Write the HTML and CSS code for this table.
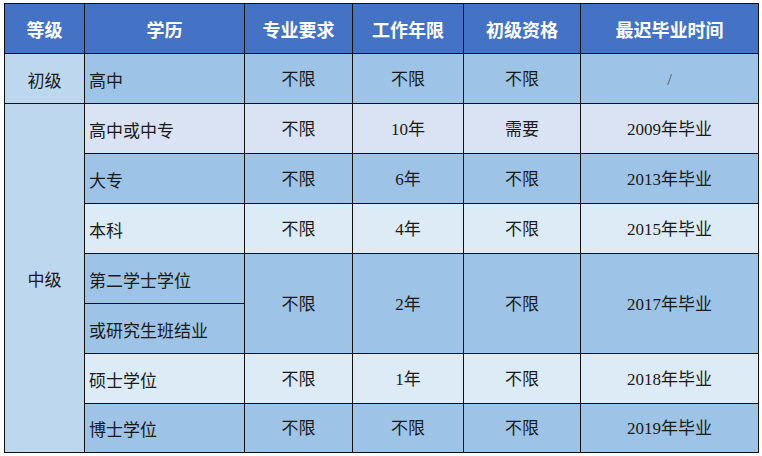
FILE: index.html
```html
<!DOCTYPE html>
<html lang="zh">
<head>
<meta charset="utf-8">
<link rel="stylesheet" href="styles.css">
</head>
<body>
<table class="grid">
  <colgroup>
    <col class="c1"><col class="c2"><col class="c3"><col class="c4"><col class="c5"><col class="c6">
  </colgroup>
  <thead>
    <tr class="head">
      <th>等级</th><th>学历</th><th>专业要求</th><th>工作年限</th><th>初级资格</th><th>最迟毕业时间</th>
    </tr>
  </thead>
  <tbody>
    <tr class="mid">
      <td class="lvl">初级</td><td class="edu">高中</td><td>不限</td><td>不限</td><td>不限</td><td class="slash">/</td>
    </tr>
    <tr class="lav">
      <td class="lvl" rowspan="8">中级</td><td class="edu">高中或中专</td><td>不限</td><td>10年</td><td>需要</td><td>2009年毕业</td>
    </tr>
    <tr class="mid">
      <td class="edu">大专</td><td>不限</td><td>6年</td><td>不限</td><td>2013年毕业</td>
    </tr>
    <tr class="light">
      <td class="edu">本科</td><td>不限</td><td>4年</td><td>不限</td><td>2015年毕业</td>
    </tr>
    <tr class="mid">
      <td class="edu">第二学士学位</td><td rowspan="2">不限</td><td rowspan="2">2年</td><td rowspan="2">不限</td><td rowspan="2">2017年毕业</td>
    </tr>
    <tr class="mid">
      <td class="edu">或研究生班结业</td>
    </tr>
    <tr class="light">
      <td class="edu">硕士学位</td><td>不限</td><td>1年</td><td>不限</td><td>2018年毕业</td>
    </tr>
    <tr class="mid last">
      <td class="edu">博士学位</td><td>不限</td><td>不限</td><td>不限</td><td>2019年毕业</td>
    </tr>
  </tbody>
</table>
</body>
</html>
```

FILE: styles.css
```css
html, body {
  margin: 0;
  padding: 0;
  background: #ffffff;
}
body {
  padding: 3px 0 0 4px;
  font-family: "Liberation Serif", "Noto Sans CJK SC", serif;
}
.grid {
  border-collapse: collapse;
  table-layout: fixed;
  width: 755px;
}
.c1 { width: 80px; }
.c2 { width: 160px; }
.c3 { width: 108px; }
.c4 { width: 111px; }
.c5 { width: 117px; }
.c6 { width: 178px; }
.grid th, .grid td {
  border: 1px solid #111;
  height: 47px;
  padding: 2px 0 0 0;
  text-align: center;
  vertical-align: middle;
  font-size: 17px;
  font-weight: normal;
  color: #1a1a1a;
  line-height: 20px;
}
.grid .last td { height: 46px; }
.head th {
  height: 49px;
  background: #4472c4;
  color: #ffffff;
  font-family: "Noto Sans CJK SC", sans-serif;
  font-weight: bold;
  font-size: 18px;
  padding-top: 0;
}
.mid td { background: #9dc3e6; }
.lav td { background: #dae3f3; }
.light td { background: #ddebf7; }
.grid td.lvl {
  background: #bdd7ee;
  font-family: "Noto Sans CJK SC", sans-serif;
}
.grid td.edu {
  text-align: left;
  padding-left: 4px;
  font-family: "Noto Sans CJK SC", sans-serif;
}
.grid td.slash { color: #555; }
```
